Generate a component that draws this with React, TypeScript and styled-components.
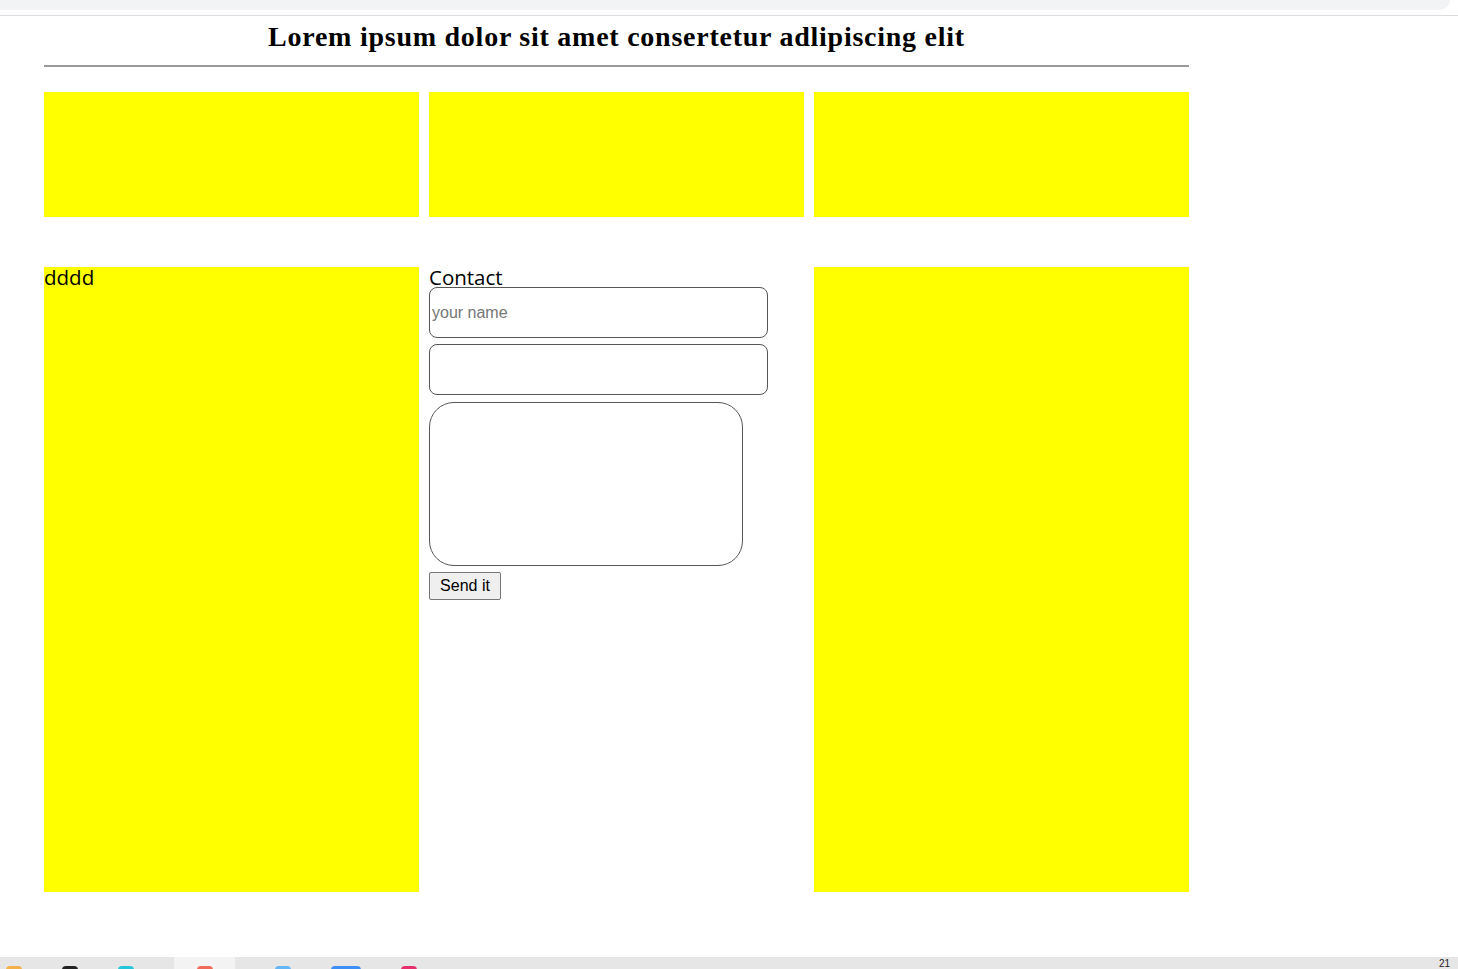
import styled, { createGlobalStyle } from "styled-components";

const GlobalStyle = createGlobalStyle`
  html, body {
    margin: 0;
    padding: 0;
    background: #fff;
  }
  body {
    font-family: "Liberation Serif", serif;
    height: 969px;
    overflow: hidden;
  }
`;

export default function App() {
  return (
    <>
      <GlobalStyle />
      <Screen>
        <BrowserTop>
          <TabStrip />
        </BrowserTop>
        <Page>
          <Wrapper>
            <Title>Lorem ipsum dolor sit amet consertetur adlipiscing elit</Title>
            <Rule />
            <Row>
              <Box />
              <Box />
              <Box />
            </Row>
            <TallRow>
              <Box>
                <BoxText>dddd</BoxText>
              </Box>
              <ContactForm onSubmit={(e) => e.preventDefault()}>
                <BoxText>Contact</BoxText>
                <Field type="text" placeholder="your name" />
                <Field type="text" />
                <Message />
                <SendButton type="submit">Send it</SendButton>
              </ContactForm>
              <Box />
            </TallRow>
          </Wrapper>
        </Page>
        <Taskbar>
          <TaskIcon color="#f4b04a" />
          <TaskIcon color="#222" />
          <TaskIcon color="#26c6da" />
          <ActiveTask>
            <TaskIcon color="#f06a5a" />
          </ActiveTask>
          <TaskIcon color="#64b5f6" />
          <TaskIcon color="#3d8ef5" wide />
          <TaskIcon color="#e9306f" />
          <Clock>21</Clock>
        </Taskbar>
      </Screen>
    </>
  );
}

const Screen = styled.div`
  display: flex;
  flex-direction: column;
  height: 969px;
`;

const BrowserTop = styled.div`
  height: 15px;
  border-bottom: 1px solid #dadce0;
  background: #fff;
`;

const TabStrip = styled.div`
  height: 10px;
  width: 1450px;
  background: #f1f3f4;
  border-bottom-right-radius: 10px;
`;

const Page = styled.div`
  flex: 1;
  overflow: hidden;
`;

const Wrapper = styled.div`
  width: 1145px;
  margin-left: 44px;
`;

const Title = styled.h1`
  margin: 0;
  padding-top: 5px;
  font-family: "Liberation Serif", "Times New Roman", serif;
  font-size: 28px;
  line-height: 32px;
  font-weight: bold;
  letter-spacing: 0.75px;
  text-align: center;
  color: #000;
`;

const Rule = styled.div`
  margin-top: 12px;
  border-top: 2px solid #999;
`;

const Row = styled.div`
  display: grid;
  grid-template-columns: repeat(3, 375px);
  gap: 10px;
  height: 125px;
  margin-top: 25px;
`;

const TallRow = styled(Row)`
  height: 625px;
  margin-top: 50px;
`;

const Box = styled.div`
  background: #ffff00;
`;

const BoxText = styled.div`
  font-family: "Open Sans", "Noto Sans", sans-serif;
  font-size: 20.5px;
  line-height: 21px;
  color: #000;
`;

const ContactForm = styled.form`
  display: flex;
  flex-direction: column;
  align-items: flex-start;
  gap: 6px;
  margin: 0;

  & > ${BoxText} {
    margin-bottom: -7px;
  }
`;

const Field = styled.input`
  box-sizing: border-box;
  width: 339px;
  height: 51px;
  margin: 0;
  padding: 0 2px;
  border: 1.5px solid #555;
  border-radius: 8px;
  font-family: "Liberation Sans", Arial, sans-serif;
  font-size: 16px;
  outline: none;

  &::placeholder {
    color: #767676;
  }
`;

const Message = styled.textarea`
  box-sizing: border-box;
  width: 314px;
  height: 164px;
  margin: 1px 0 0;
  border: 1.5px solid #555;
  border-radius: 25px;
  resize: none;
  outline: none;
`;

const SendButton = styled.button`
  box-sizing: border-box;
  height: 28px;
  width: 72px;
  margin: 0;
  padding: 0 8px;
  background: #efefef;
  border: 1px solid #767676;
  border-radius: 2px;
  font-family: "Liberation Sans", Arial, sans-serif;
  font-size: 16px;
  color: #000;
`;

const Taskbar = styled.div`
  height: 12px;
  background: #e6e6e6;
  display: flex;
  align-items: flex-end;
  padding-left: 6px;
  gap: 40px;
  position: relative;
  overflow: hidden;
`;

const ActiveTask = styled.div`
  align-self: stretch;
  width: 61px;
  background: #f3f3f3;
  display: flex;
  align-items: flex-end;
  justify-content: center;
`;

const TaskIcon = styled.span<{ color: string; wide?: boolean }>`
  display: block;
  width: ${(p) => (p.wide ? 30 : 16)}px;
  height: 4px;
  margin-bottom: -1px;
  border-radius: 6px 6px 0 0;
  background: ${(p) => p.color};
`;

const Clock = styled.span`
  position: absolute;
  right: 8px;
  top: 1px;
  font-family: "Liberation Sans", Arial, sans-serif;
  font-size: 10px;
  line-height: 11px;
  color: #222;
`;
